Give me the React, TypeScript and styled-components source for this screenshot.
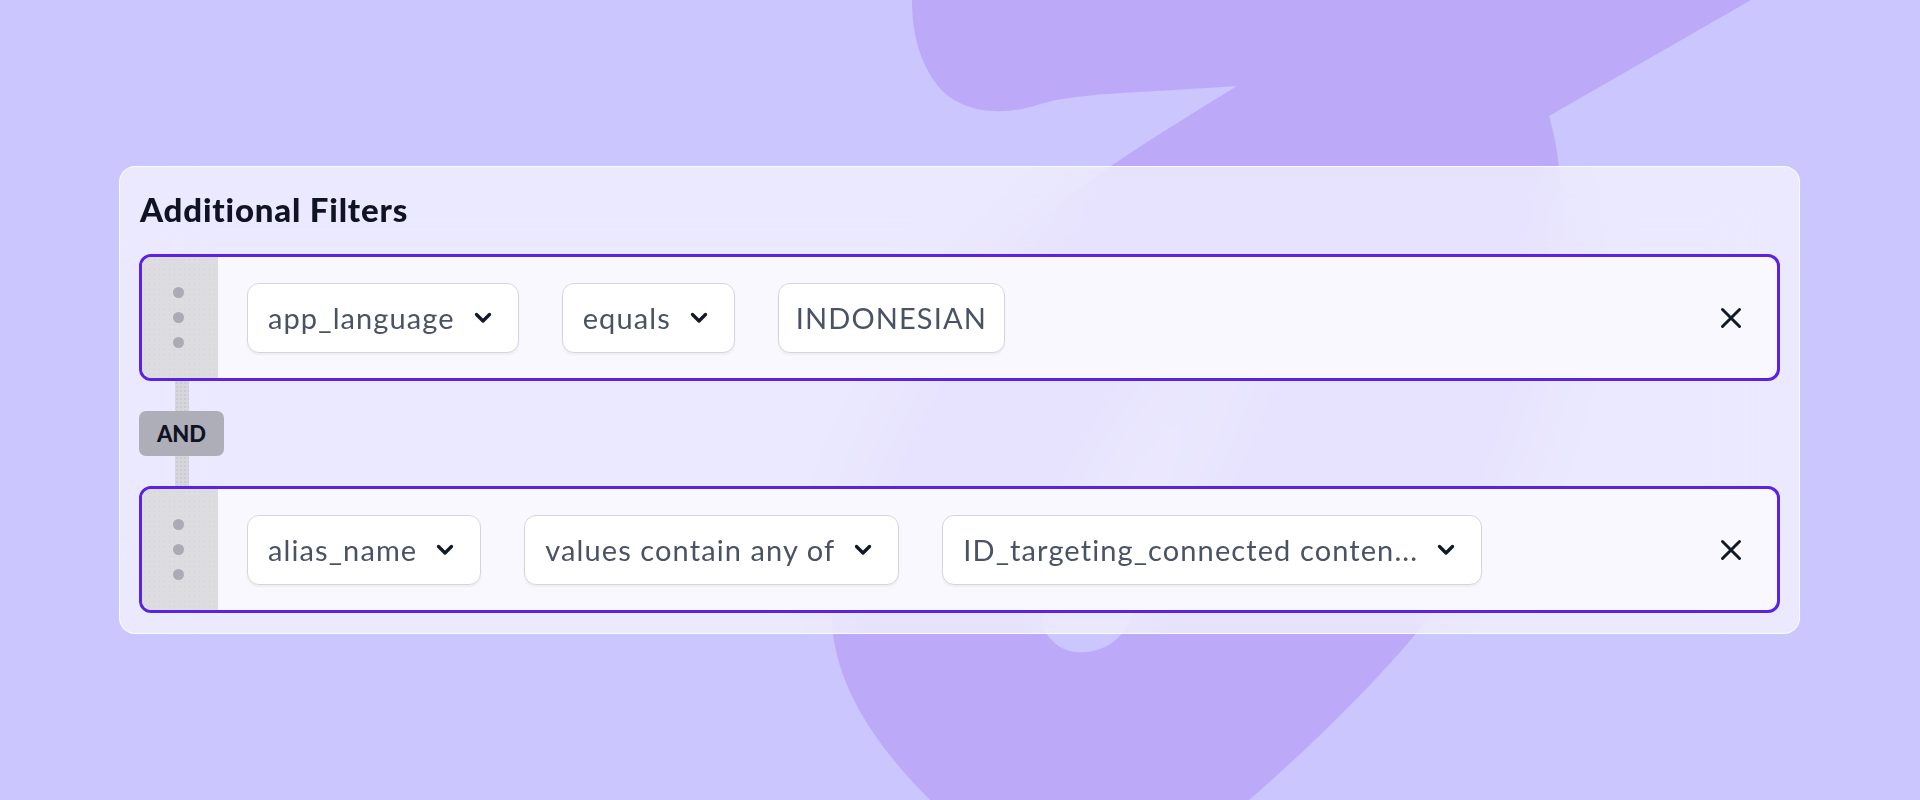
import React from "react";
import styled, { createGlobalStyle } from "styled-components";

const GlobalStyle = createGlobalStyle`
    html, body {
        margin: 0;
        padding: 0;
    }
    body {
        font-family: Lato, "Noto Sans", sans-serif;
        background: #cbc6fe;
    }
`;

type Filter = {
    id: number;
    fields: { label: string; dropdown: boolean }[];
};

const filters: Filter[] = [
    {
        id: 1,
        fields: [
            { label: "app_language", dropdown: true },
            { label: "equals", dropdown: true },
            { label: "INDONESIAN", dropdown: false },
        ],
    },
    {
        id: 2,
        fields: [
            { label: "alias_name", dropdown: true },
            { label: "values contain any of", dropdown: true },
            { label: "ID_targeting_connected conten...", dropdown: true },
        ],
    },
];

const Chevron = () => (
    <svg width="18" height="12" viewBox="0 0 18 12" fill="none">
        <path d="M2.5 2.5 L9 9 L15.5 2.5" stroke="#111827" strokeWidth="3.3" strokeLinecap="round" strokeLinejoin="round" />
    </svg>
);

const CloseIcon = () => (
    <svg width="22" height="22" viewBox="0 0 22 22" fill="none">
        <path d="M2.5 2.5 L19.5 19.5 M19.5 2.5 L2.5 19.5" stroke="#111827" strokeWidth="3" strokeLinecap="round" />
    </svg>
);

export default function App() {
    return (
        <Page>
            <GlobalStyle />
            <Backdrop viewBox="0 0 1920 800" preserveAspectRatio="none">
                <path
                    d="M 912 0 L 1751 0 L 1549 116 C 1566 170 1568 280 1552 380 C 1525 520 1410 660 1249 800 L 930 800 C 870 740 834 680 832 620 C 830 520 880 400 960 300 C 1030 215 1100 170 1237 86 C 1160 92 1080 92 1040 104 C 1000 118 955 112 935 82 C 918 58 912 30 912 0 Z"
                    fill="#bcaaf9"
                />
                <path
                    d="M 1041 624 C 1052 648 1070 654 1086 652 C 1106 650 1120 640 1128 624 C 1180 520 1260 360 1290 240 C 1200 320 1090 450 1041 624 Z"
                    fill="#cbc6fe"
                />
            </Backdrop>

            <Card>
                <Title>Additional Filters</Title>
                {filters.map((filter, index) => (
                    <React.Fragment key={filter.id}>
                        {index > 0 && (
                            <Joiner>
                                <JoinLine />
                                <AndBadge>AND</AndBadge>
                                <JoinLine />
                            </Joiner>
                        )}
                        <FilterRow>
                            <Handle>
                                <Dot />
                                <Dot />
                                <Dot />
                            </Handle>
                            <Fields>
                                {filter.fields.map((field) => (
                                    <Select key={field.label} $dropdown={field.dropdown}>
                                        <span>{field.label}</span>
                                        {field.dropdown && <Chevron />}
                                    </Select>
                                ))}
                            </Fields>
                            <RemoveButton aria-label="Remove filter">
                                <CloseIcon />
                            </RemoveButton>
                        </FilterRow>
                    </React.Fragment>
                ))}
            </Card>
        </Page>
    );
}

const Page = styled.div`
    position: relative;
    height: 800px;
    overflow: hidden;
    padding: 166px 120px 0 119px;
    box-sizing: border-box;
`;

const Backdrop = styled.svg`
    position: absolute;
    inset: 0;
    width: 1920px;
    height: 800px;
    z-index: 0;
`;

const Card = styled.div`
    position: relative;
    z-index: 1;
    box-sizing: border-box;
    width: 1681px;
    padding: 21px 19px 20px 19px;
    border: 1px solid rgba(255, 255, 255, 0.8);
    border-radius: 16px;
    background: rgba(246, 245, 255, 0.74);
    backdrop-filter: blur(40px);
`;

const Title = styled.h2`
    margin: 0 0 23px 1px;
    font-family: Lato, sans-serif;
    font-weight: 900;
    font-size: 33px;
    letter-spacing: 0.8px;
    line-height: 43px;
    color: #0f1322;
`;

const FilterRow = styled.div`
    display: flex;
    align-items: center;
    height: 127px;
    box-sizing: border-box;
    border: 3px solid #5b22e6;
    border-radius: 12px;
    background: #f9f8fe;
    overflow: hidden;
`;

const Handle = styled.div`
    align-self: stretch;
    width: 76px;
    flex-shrink: 0;
    display: flex;
    flex-direction: column;
    align-items: center;
    justify-content: center;
    gap: 14px;
    padding-right: 4px;
    box-sizing: border-box;
    background-color: #dcdce1;
    background-image: radial-gradient(rgba(0, 0, 0, 0.05) 0.7px, transparent 0.9px);
    background-size: 5px 5px;
`;

const Dot = styled.span`
    width: 11px;
    height: 11px;
    border-radius: 50%;
    background: #aaabb5;
`;

const Fields = styled.div`
    display: flex;
    align-items: center;
    gap: 43px;
    margin-left: 29px;
`;

const Select = styled.div<{ $dropdown: boolean }>`
    display: flex;
    align-items: center;
    gap: 19px;
    height: 70px;
    box-sizing: border-box;
    padding: ${(p) => (p.$dropdown ? "0 26px 0 20px" : "0 17px")};
    border: 1.5px solid #d5d5de;
    border-radius: 12px;
    background: #ffffff;
    box-shadow: 0 2px 2px rgba(30, 30, 60, 0.05);
    font-family: Lato, sans-serif;
    font-size: 29px;
    letter-spacing: 1.1px;
    color: #4a5266;
    white-space: nowrap;
`;

const RemoveButton = styled.button`
    margin-left: auto;
    margin-right: 35px;
    padding: 0;
    border: none;
    background: none;
    display: flex;
    cursor: pointer;
`;

const Joiner = styled.div`
    display: flex;
    flex-direction: column;
    height: 105px;
`;

const JoinLine = styled.div`
    flex: 1;
    width: 14px;
    margin-left: 36px;
    background-color: #d6d6dc;
    background-image: radial-gradient(rgba(0, 0, 0, 0.06) 0.7px, transparent 0.9px);
    background-size: 4px 4px;
`;

const AndBadge = styled.div`
    width: 85px;
    height: 45px;
    display: flex;
    align-items: center;
    justify-content: center;
    border-radius: 7px;
    background: #adaeb8;
    font-family: Lato, sans-serif;
    font-weight: 900;
    font-size: 22px;
    color: #0f1322;
`;
